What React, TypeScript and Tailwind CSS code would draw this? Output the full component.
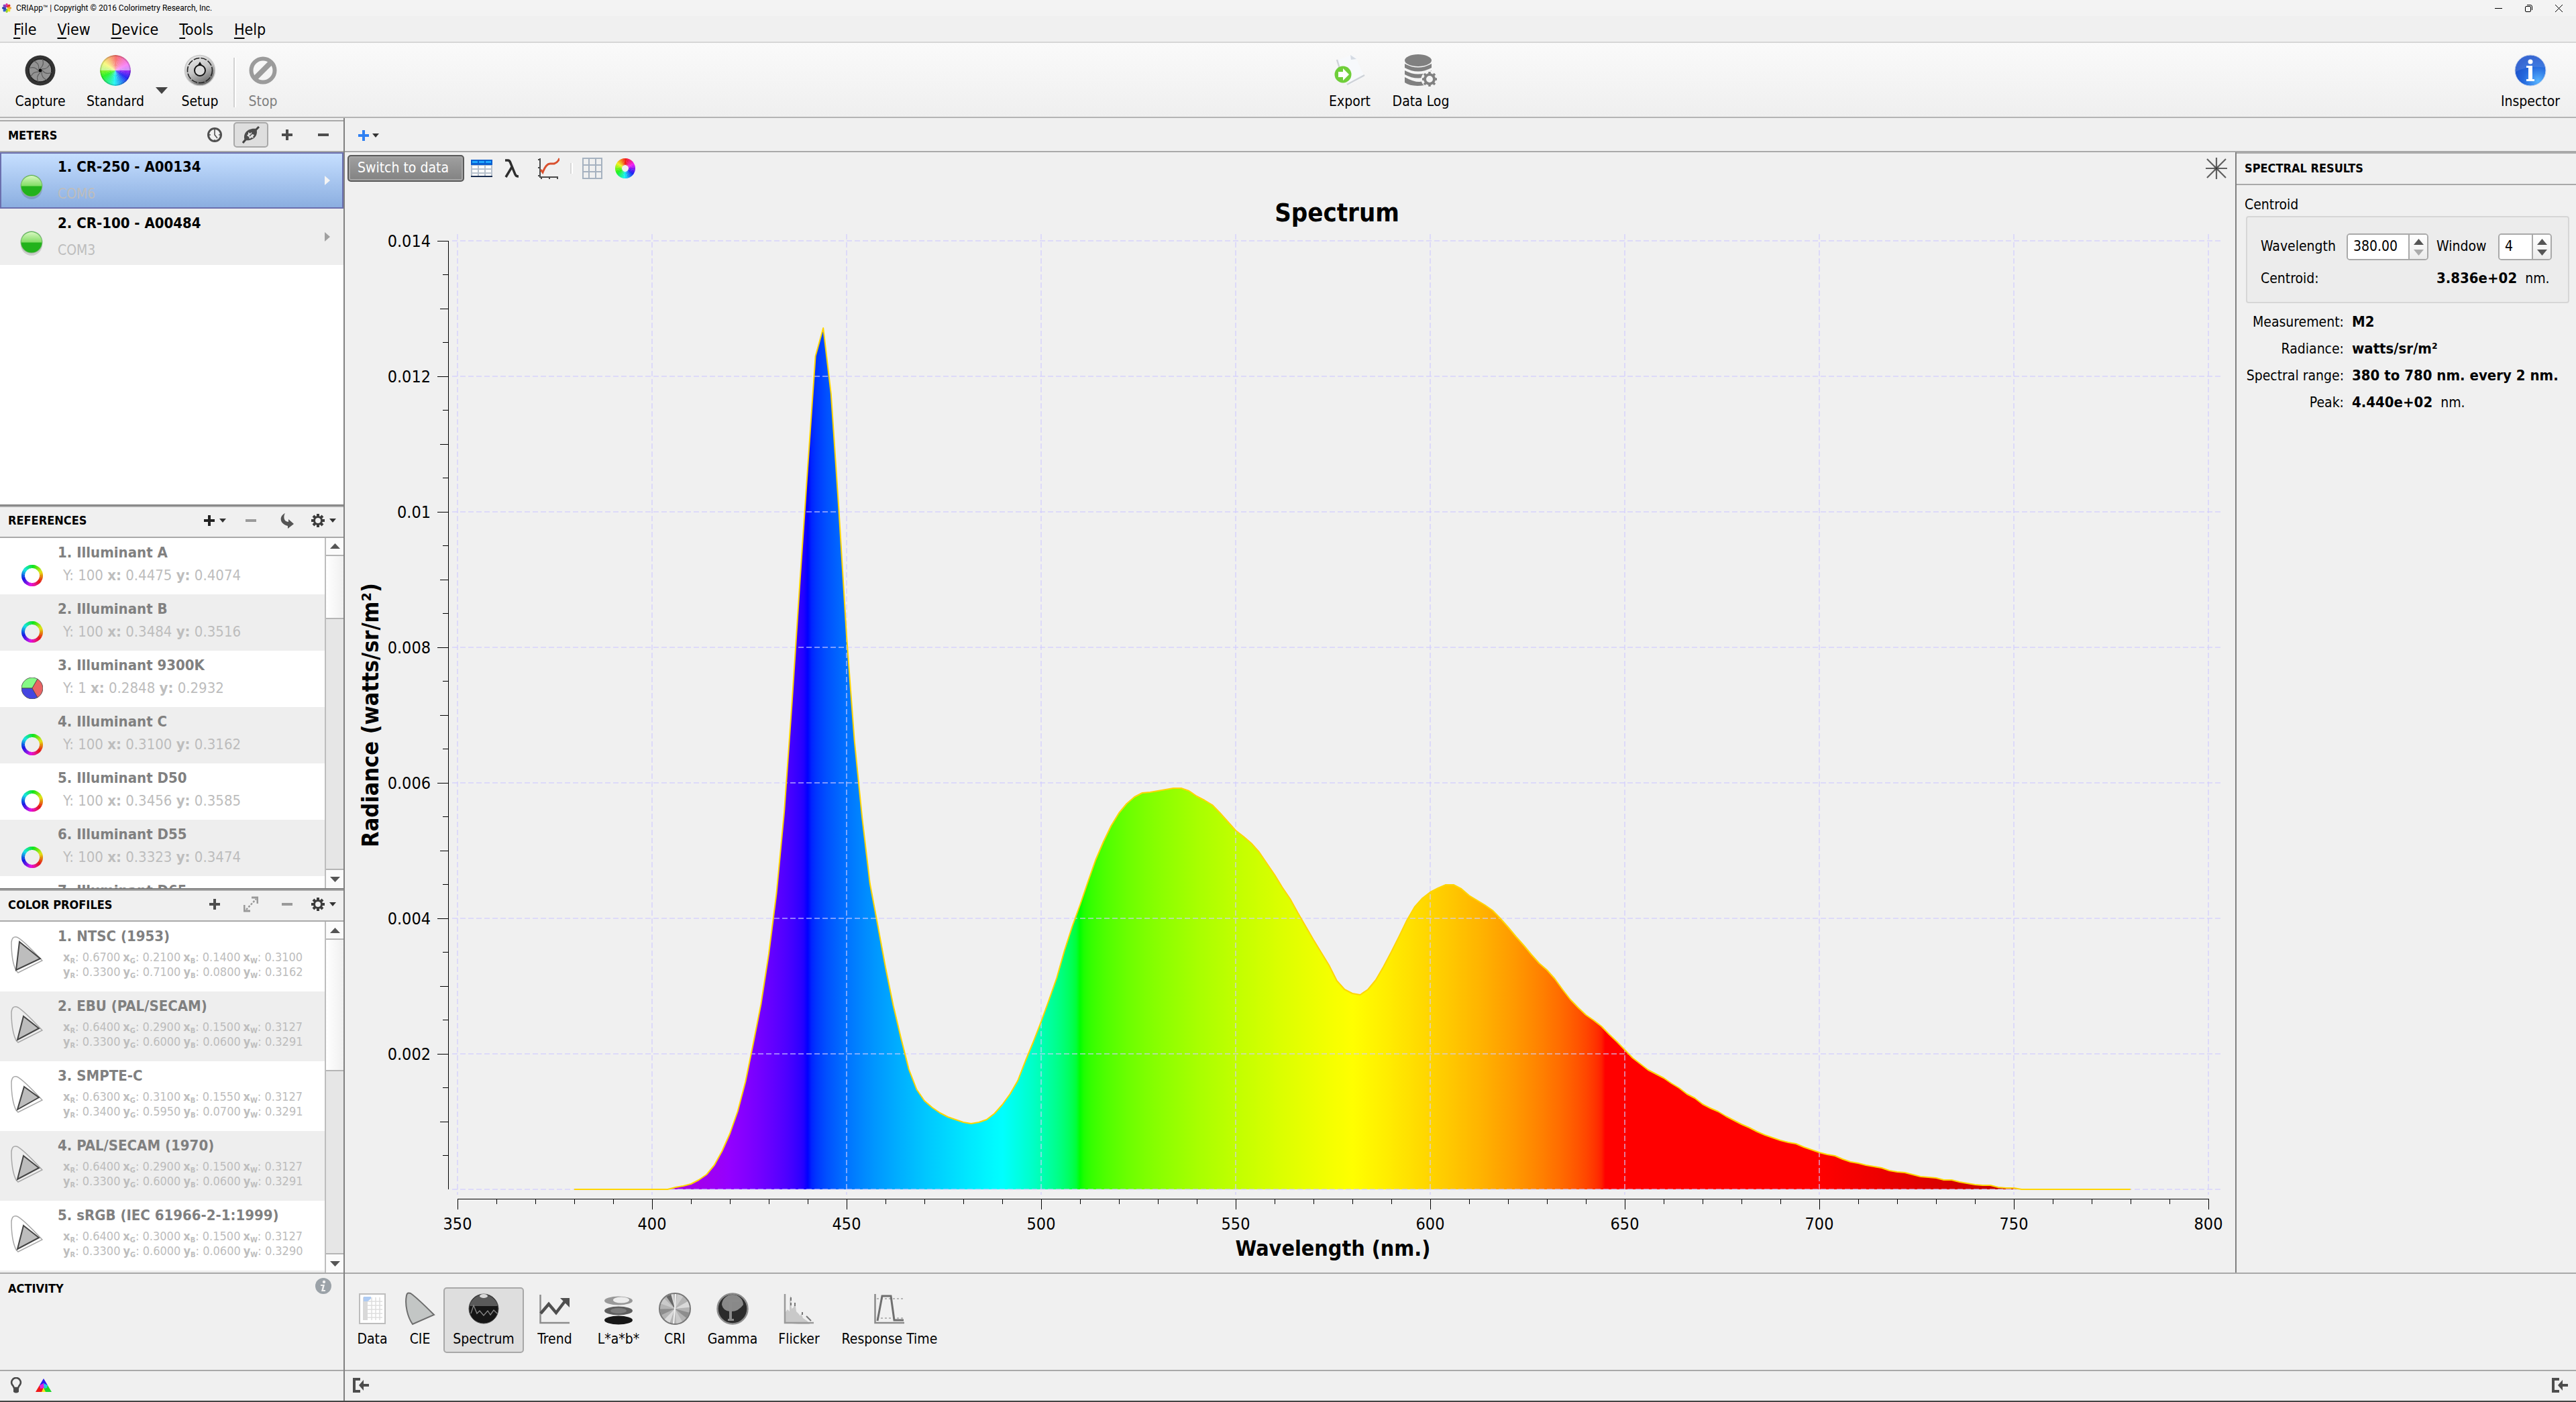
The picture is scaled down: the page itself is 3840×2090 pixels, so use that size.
import React from "react";

/* ------------------------------------------------------------------ data */

const meters = [
  { name: "1. CR-250 - A00134", port: "COM6", selected: true },
  { name: "2. CR-100 - A00484", port: "COM3", selected: false },
];

const references = [
  { name: "1. Illuminant A", Y: "100", x: "0.4475", y: "0.4074", pie: false },
  { name: "2. Illuminant B", Y: "100", x: "0.3484", y: "0.3516", pie: false },
  { name: "3. Illuminant 9300K", Y: "1", x: "0.2848", y: "0.2932", pie: true },
  { name: "4. Illuminant C", Y: "100", x: "0.3100", y: "0.3162", pie: false },
  { name: "5. Illuminant D50", Y: "100", x: "0.3456", y: "0.3585", pie: false },
  { name: "6. Illuminant D55", Y: "100", x: "0.3323", y: "0.3474", pie: false },
];

const profiles = [
  { name: "1. NTSC (1953)", x: ["0.6700", "0.2100", "0.1400", "0.3100"], y: ["0.3300", "0.7100", "0.0800", "0.3162"], gamut: "13,9 44,34 8,51" },
  { name: "2. EBU (PAL/SECAM)", x: ["0.6400", "0.2900", "0.1500", "0.3127"], y: ["0.3300", "0.6000", "0.0600", "0.3291"], gamut: "19,16 42,34 10,51" },
  { name: "3. SMPTE-C", x: ["0.6300", "0.3100", "0.1550", "0.3127"], y: ["0.3400", "0.5950", "0.0700", "0.3291"], gamut: "20,17 42,33 10,51" },
  { name: "4. PAL/SECAM (1970)", x: ["0.6400", "0.2900", "0.1500", "0.3127"], y: ["0.3300", "0.6000", "0.0600", "0.3291"], gamut: "19,16 42,34 10,51" },
  { name: "5. sRGB (IEC 61966-2-1:1999)", x: ["0.6400", "0.3000", "0.1500", "0.3127"], y: ["0.3300", "0.6000", "0.0600", "0.3290"], gamut: "19,16 42,34 10,51" },
];

/* Radiance samples from 404 nm to 752 nm, one every 2 nm, in units of 1/101000 W/sr/m2. */
const FIRST_NM = 404;
const samples = [
  0, 3, 5, 8, 14, 22, 36, 57, 83, 116, 160, 217, 276, 351, 442, 564, 728, 905, 1075, 1242, 1284, 1186, 1014, 825, 670,
  554, 456, 394, 331, 274, 225, 179, 149, 132, 122, 114, 108, 104, 100, 98, 100, 104, 113, 126, 142, 162, 192, 220,
  250, 282, 315, 356, 392, 424, 458, 491, 518, 542, 561, 575, 585, 591, 592, 594, 596, 598, 598, 594, 586, 580, 573,
  561, 548, 535, 526, 516, 503, 486, 469, 450, 433, 412, 392, 372, 353, 334, 311, 298, 292, 290, 298, 312, 332, 354,
  377, 401, 421, 434, 443, 449, 454, 454, 448, 438, 431, 424, 416, 404, 391, 377, 364, 350, 337, 327, 314, 298, 283,
  271, 260, 252, 243, 231, 220, 208, 196, 187, 178, 172, 166, 158, 151, 142, 136, 127, 121, 116, 109, 103, 97, 92, 86,
  81, 77, 73, 70, 68, 63, 59, 55, 52, 50, 45, 41, 39, 36, 34, 32, 28, 26, 25, 22, 19, 18, 17, 14, 14, 11, 9, 7, 6, 6, 3,
  2, 2, 0,
];

/* --------------------------------------------------------------- helpers */

const polar = (cx: number, cy: number, r: number, deg: number) => {
  const a = ((deg - 90) * Math.PI) / 180;
  return `${(cx + r * Math.cos(a)).toFixed(2)} ${(cy + r * Math.sin(a)).toFixed(2)}`;
};

function HueWheel({ size, start, hole = 0, light = 50, label }: { size: number; start: number; hole?: number; light?: number; label?: string }) {
  const n = 48;
  const step = 360 / n;
  const c = size / 2;
  return (
    <svg width={size} height={size} viewBox={`0 0 ${size} ${size}`} aria-label={label} className="block">
      {Array.from({ length: n }, (_, i) => {
        const a = i * step - 0.5;
        const b = (i + 1) * step + 0.5;
        const hue = (start - i * step + 720) % 360;
        const d = hole
          ? `M${polar(c, c, c, a)} A${c} ${c} 0 0 1 ${polar(c, c, c, b)} L${polar(c, c, hole, b)} A${hole} ${hole} 0 0 0 ${polar(c, c, hole, a)}Z`
          : `M${c} ${c} L${polar(c, c, c, a)} A${c} ${c} 0 0 1 ${polar(c, c, c, b)}Z`;
        return <path key={i} d={d} fill={`hsl(${hue} 90% ${light}%)`} />;
      })}
    </svg>
  );
}

/* Approximate display colour of a single wavelength. */
function spectral(w: number): string {
  let r = 0;
  let g = 0;
  let b = 0;
  if (w < 440) {
    r = (440 - w) / 60;
    b = 1;
  } else if (w < 490) {
    g = (w - 440) / 50;
    b = 1;
  } else if (w < 510) {
    g = 1;
    b = (510 - w) / 20;
  } else if (w < 580) {
    r = (w - 510) / 70;
    g = 1;
  } else if (w < 645) {
    r = 1;
    g = (645 - w) / 65;
  } else {
    r = 1;
  }
  let f = 1;
  if (w < 420) f = 0.3 + (0.7 * (w - 380)) / 40;
  if (w > 700) f = 0.3 + (0.7 * (780 - w)) / 80;
  const k = (v: number) => Math.round(255 * Math.sqrt(v * f));
  return `rgb(${k(r)},${k(g)},${k(b)})`;
}

/* ----------------------------------------------------------------- icons */

const Plus = ({ color = "#4d4d4d" }: { color?: string }) => (
  <svg width="16" height="16" viewBox="0 0 16 16"><path d="M6 0h4v6h6v4h-6v6H6v-6H0V6h6z" fill={color} /></svg>
);
const Minus = ({ color = "#4d4d4d" }: { color?: string }) => (
  <svg width="16" height="16" viewBox="0 0 16 16"><path d="M0 6h16v4H0z" fill={color} /></svg>
);
const Caret = () => (
  <svg width="10" height="6" viewBox="0 0 10 6"><path d="M0 0h10L5 6z" fill="#333" /></svg>
);
const Clock = () => (
  <svg width="24" height="24" viewBox="0 0 24 24" fill="none" stroke="#505050">
    <circle cx="12" cy="12" r="9.5" strokeWidth="3" />
    <path d="M12 4v8l4 5" strokeWidth="1.6" />
    <path d="M12 19v2M3 12h3M18 12h3" strokeWidth="1.4" />
  </svg>
);
const Plug = () => (
  <svg width="26" height="26" viewBox="0 0 26 26">
    <path d="M1 25l5-6M20 6l5-5" stroke="#444" strokeWidth="3" />
    <path d="M4 21C0 12 8 2 21 4c4 10-5 19-17 17z" fill="#4c4c4c" />
    <path d="M9 9l3 2 2-2 1 3 3 1-2 3 1 2-3-1-3 2-1-3-3-2 2-2z" fill="#e2e2e2" />
    <path d="M11 15l5-5" stroke="#4c4c4c" strokeWidth="1.500" />
  </svg>
);
const Gear = () => (
  <svg width="20" height="20" viewBox="0 0 20 20">
    <g stroke="#3c3c3c" strokeWidth="4">
      <path d="M10 0v20M0 10h20M3 3l14 14M17 3L3 17" />
    </g>
    <circle cx="10" cy="10" r="7" fill="#3c3c3c" />
    <circle cx="10" cy="10" r="4" fill="#f0f0f0" />
  </svg>
);
const Curl = () => (
  <svg width="22" height="24" viewBox="0 0 22 24">
    <path d="M8 1C-1 5-1 17 12 20v4l9-7-8-7v4C6 14 5 6 8 1z" fill="#555" />
  </svg>
);
const Expand = () => (
  <svg width="22" height="24" viewBox="0 0 22 24" fill="none" stroke="#999">
    <path d="M12 2h9v9" strokeWidth="3" />
    <path d="M1 13v9h9" strokeWidth="3" />
    <path d="M4 20L19 4" strokeWidth="2.4" strokeDasharray="3 2" />
  </svg>
);
const GreenLed = () => (
  <svg width="36" height="38" viewBox="0 0 36 38">
    <defs>
      <linearGradient id="led-top" x1="0" y1="0" x2="0" y2="1">
        <stop offset="0" stopColor="#d8f7c0" />
        <stop offset="1" stopColor="#7fdc62" />
      </linearGradient>
    </defs>
    <ellipse cx="18" cy="21" rx="16" ry="16" fill="#000" opacity=".14" />
    <circle cx="18" cy="17" r="16.5" fill="#8bb487" />
    <circle cx="18" cy="17" r="15.5" fill="#22b21c" />
    <path d="M2.500 17.500a15.500 15.500 0 0 1 31 0z" fill="url(#led-top)" />
  </svg>
);
const Pie = () => (
  <svg width="32" height="32" viewBox="0 0 32 32" stroke="#444" strokeWidth=".8">
    <path d="M16 16L24 2.200A16 16 0 0 0 0 16z" fill="#86f986" />
    <path d="M16 16H0A16 16 0 0 0 24 29.800z" fill="#4545e0" />
    <path d="M16 16L24 29.800A16 16 0 0 0 24 2.200z" fill="#e96464" />
  </svg>
);
const Gamut = ({ points }: { points: string }) => (
  <svg width="48" height="56" viewBox="0 0 48 56">
    <path d="M8 52C3 42 1 30 1 10Q2 0 9 2Q16 4 47 37L11 55Z" fill="none" stroke="#a8a8a8" strokeWidth="1.500" />
    <polygon points={points} fill="#bdbdbd" stroke="#444" strokeWidth="2" />
  </svg>
);

const Aperture = () => (
  <svg width="46" height="46" viewBox="0 0 46 46">
    <circle cx="23" cy="23" r="22.500" fill="#333" />
    <circle cx="23" cy="23" r="17" fill="#939393" stroke="#1f1f1f" strokeWidth="1.500" />
    <g stroke="#5e5e5e" strokeWidth="1.200" fill="none">
      {[0, 45, 90, 135, 180, 225, 270, 315].map((a) => (
        <path key={a} d="M23 20Q30 14 26 6" transform={`rotate(${a} 23 23)`} />
      ))}
    </g>
    <circle cx="23" cy="23" r="2.500" fill="#000" />
  </svg>
);
const StandardWheel = () => (
  <span className="relative block size-[46px] overflow-hidden rounded-full">
    <HueWheel size={46} start={0} light={56} />
    <span className="absolute inset-x-0 top-0 h-1/2 rounded-t-full bg-gradient-to-b from-white/30 to-white/50" />
    <span className="absolute inset-0 rounded-full border-2 border-black/15" />
  </span>
);
const Dial = () => (
  <svg width="48" height="48" viewBox="0 0 48 48">
    <defs>
      <linearGradient id="dial" x1="0.200" y1="0" x2="0.700" y2="1">
        <stop offset="0" stopColor="#ededed" />
        <stop offset=".5" stopColor="#c4c4c4" />
        <stop offset="1" stopColor="#5c5c5c" />
      </linearGradient>
    </defs>
    <circle cx="24" cy="24" r="22.500" fill="url(#dial)" stroke="#c9c9c9" strokeWidth="1.500" />
    <circle cx="24" cy="24" r="18.500" fill="none" stroke="#222" strokeWidth="1.600" strokeDasharray="9 2" />
    <circle cx="24" cy="24" r="8" fill="#dcdcdc" stroke="#111" strokeWidth="2" />
    <path d="M21 16l3-5 3 5z" fill="#111" />
  </svg>
);
const StopSign = () => (
  <svg width="42" height="42" viewBox="0 0 42 42" fill="none" stroke="#9b9b9b" strokeWidth="6">
    <circle cx="21" cy="21" r="17.500" />
    <path d="M9 33L33 9" strokeWidth="8" />
  </svg>
);
const ExportIcon = () => (
  <svg width="48" height="48" viewBox="0 0 48 48">
    <path d="M5 9L27 1l6 4 13 28-23 13z" fill="#f7f9fc" />
    <path d="M5 8l4 13M20 45l26-14" stroke="#cfd3d8" strokeWidth="2.500" fill="none" />
    <path d="M25 1l9 6-8 1z" fill="#d5dbe3" />
    <circle cx="14" cy="30" r="12.500" fill="#6fce3a" />
    <path d="M7 26h7v-5l9 9-9 9v-5H7z" fill="#fff" />
  </svg>
);
const DataLogIcon = () => (
  <svg width="50" height="50" viewBox="0 0 50 50">
    <g fill="#808080">
      <ellipse cx="21" cy="10" rx="20" ry="9" />
      <path d="M1 15q20 11 40 0v6q-20 11-40 0z" />
      <path d="M1 25q20 11 40 0v6q-20 11-40 0z" />
      <path d="M1 35q20 11 30 5v7q-20 3-30-4z" />
    </g>
    <circle cx="38" cy="38" r="12.500" fill="#f4f4f4" />
    <circle cx="38" cy="38" r="7" fill="none" stroke="#808080" strokeWidth="4" />
    <g stroke="#808080" strokeWidth="3.500">
      <path d="M38 27v4M38 45v4M27 38h4M45 38h4M30 30l3 3M43 43l3 3M46 30l-3 3M33 43l-3 3" />
    </g>
  </svg>
);
const InspectorIcon = () => (
  <svg width="48" height="48" viewBox="0 0 48 48">
    <defs>
      <radialGradient id="info" cx=".75" cy=".85" r=".8">
        <stop offset="0" stopColor="#58b4ff" />
        <stop offset=".6" stopColor="#2468dd" />
        <stop offset="1" stopColor="#1c53cc" />
      </radialGradient>
    </defs>
    <circle cx="24" cy="24" r="23" fill="url(#info)" stroke="#c5d3ec" />
    <path d="M2 26A22 22 0 0 1 46 20Q22 16 2 26z" fill="#fff" opacity=".12" />
    <circle cx="24" cy="11" r="3.500" fill="#fff" />
    <path d="M18 17h9v20h3v3H18v-3h3V20h-3z" fill="#fff" />
  </svg>
);

/* Icons of the bottom view switcher. */
const DataIcon = () => (
  <svg width="40" height="46" viewBox="0 0 40 46">
    <rect x="1" y="1" width="38" height="44" fill="#fff" stroke="#bdbdbd" strokeWidth="2" />
    <path d="M6 6h7v34H6z" fill="#d9d9d9" />
    <path d="M13 12h22M13 18h22M13 24h22M13 30h22M13 36h22M19 6v34M25 6v34M31 6v34" stroke="#dedede" strokeWidth="1.500" />
    <path d="M7 5h11v3l-5 4H7z" fill="#aecbf3" />
  </svg>
);
const CieIcon = () => (
  <svg width="46" height="50" viewBox="0 0 46 50">
    <path d="M12 48C5 38 0 20 3 5Q4 0 9 2Q18 8 44 34z" fill="#c3c6c5" stroke="#6d6d6d" strokeWidth="2" />
  </svg>
);
const SpectrumIcon = () => (
  <svg width="46" height="48" viewBox="0 0 46 48">
    <circle cx="23" cy="24" r="22" fill="#161616" stroke="#555" />
    <path d="M2 20a21.500 21.500 0 0 1 42 0z" fill="#5a5a5a" />
    <ellipse cx="23" cy="5" rx="6" ry="3" fill="#d8d8d8" />
    <path d="M4 31l4-12 5 12 4-4 6 7 6-7 4 6 5-7 5 5" fill="none" stroke="#8a8a8a" strokeWidth="1.300" />
  </svg>
);
const TrendIcon = () => (
  <svg width="46" height="46" viewBox="0 0 46 46">
    <path d="M1.500 2v42H45" fill="none" stroke="#8d8d8d" strokeWidth="2.500" />
    <path d="M2 30L14 16l11 13L38 12" fill="none" stroke="#4f4f4f" strokeWidth="4.500" />
    <path d="M31 7h14v14z" fill="#4f4f4f" />
  </svg>
);
const LabIcon = () => (
  <svg width="44" height="48" viewBox="0 0 44 48">
    <ellipse cx="22" cy="12" rx="21" ry="6.500" fill="#999" />
    <ellipse cx="26" cy="11" rx="12" ry="4.500" fill="#ececec" />
    <ellipse cx="22" cy="27" rx="21" ry="6.500" fill="#5e5e5e" />
    <ellipse cx="22" cy="27" rx="12" ry="4" fill="#7d7d7d" />
    <ellipse cx="22" cy="41" rx="21" ry="6.500" fill="#171717" />
  </svg>
);
const CriIcon = () => (
  <svg width="48" height="48" viewBox="0 0 48 48">
    <circle cx="24" cy="24" r="23" fill="#b3b3b3" stroke="#777" strokeWidth="2" />
    {[10, 60, 105, 150, 200, 245, 290, 330].map((a, i) => (
      <path key={a} d={`M24 24L${polar(24, 24, 22, a)} A22 22 0 0 1 ${polar(24, 24, 22, a + 24)}Z`} fill={i % 3 === 2 ? "#8d8d8d" : i % 3 === 1 ? "#dadada" : "#cacaca"} />
    ))}
    <path d={`M24 24L${polar(24, 24, 22, 325)} A22 22 0 0 1 ${polar(24, 24, 22, 345)}Z`} fill="#666" />
    <path d="M24 24L22 46M24 24l1-22" stroke="#f2f2f2" strokeWidth="2" />
  </svg>
);
const GammaIcon = () => (
  <svg width="48" height="48" viewBox="0 0 48 48">
    <circle cx="24" cy="24" r="22.500" fill="#2b2b2b" stroke="#8c8c8c" strokeWidth="2.500" />
    <path d="M8 18a16 15 0 0 1 32 0q-8 11-20 10Q10 27 8 18z" fill="#9a9a9a" opacity=".85" />
    <path d="M12 12q4-3 10-2h12v4H23v25h3v3h-9v-3h2V14q-4-1-7 1z" fill="#8b8b8b" />
  </svg>
);
const FlickerIcon = () => (
  <svg width="46" height="46" viewBox="0 0 46 46">
    <path d="M3 44V28l3-4 3 3V8l2-5 1 20 3-2 2-8 2 14 4 4 2 3 1-4 3 7 6 4 6 7z" fill="#c9c9c9" />
    <path d="M2 1v43h43" fill="none" stroke="#9a9a9a" strokeWidth="2.500" />
    <path d="M11 6v5M11 14v4M17 14v5M28 28v4M34 34l7 7" stroke="#777" strokeWidth="2" />
  </svg>
);
const ResponseIcon = () => (
  <svg width="46" height="46" viewBox="0 0 46 46">
    <path d="M1.500 1v43H45" fill="none" stroke="#8b8b8b" strokeWidth="2.500" />
    <path d="M4 8h40M4 37h40" stroke="#b5b5b5" strokeWidth="2" strokeDasharray="3 3" />
    <path d="M5 41L12 4h13l5 36h14" fill="none" stroke="#6f6f6f" strokeWidth="3" />
  </svg>
);
const Dock = () => (
  <svg width="24" height="22" viewBox="0 0 24 22">
    <path d="M11 2H2v18h9" fill="none" stroke="#4d4d4d" strokeWidth="4" />
    <path d="M9 11l7-8v6h8v4h-8v6z" fill="#4d4d4d" />
  </svg>
);

/* --------------------------------------------------------- small widgets */

function HeaderButton({ label, pressed, children }: { label: string; pressed?: boolean; children: React.ReactNode }) {
  return (
    <button
      type="button"
      aria-label={label}
      aria-pressed={pressed}
      className={
        pressed
          ? "flex h-[38px] w-[52px] mx-px items-center justify-center gap-[7px] rounded-[5px] border-2 border-[#a8a8a8] bg-[#dedede]"
          : "flex h-[38px] w-[54px] items-center justify-center gap-[7px]"
      }
    >
      {children}
    </button>
  );
}

function SectionHeader({ title, children }: { title: string; children?: React.ReactNode }) {
  return (
    <header className="flex h-[46px] shrink-0 items-center border-b-2 border-[#a9a9a9] bg-[#f0f0f0] pl-3 pr-[3px] pb-1">
      <h2 className="grow text-[18px] font-bold">{title}</h2>
      {children}
    </header>
  );
}

function ScrollBar({ thumb }: { thumb: string }) {
  return (
    <div className="flex w-7 shrink-0 flex-col border-l-2 border-[#bdbdbd] bg-[#e6e6e6]">
      <button type="button" aria-label="Scroll up" className="flex h-[27px] shrink-0 items-center justify-center border-b-2 border-[#b5b5b5] bg-[#fbfbfb]">
        <svg width="15" height="8" viewBox="0 0 15 8"><path d="M0 8h15L7.500 0z" fill="#555" /></svg>
      </button>
      <div className={`${thumb} shrink-0 border-b-2 border-[#b5b5b5] bg-gradient-to-r from-white to-[#f0f0f0]`} />
      <div className="grow" />
      <button type="button" aria-label="Scroll down" className="flex h-[29px] shrink-0 items-center justify-center border-t-2 border-[#b5b5b5] bg-[#fbfbfb]">
        <svg width="15" height="8" viewBox="0 0 15 8"><path d="M0 0h15L7.500 8z" fill="#555" /></svg>
      </button>
    </div>
  );
}

function ToolButton({ label, width, disabled, children }: { label: string; width: string; disabled?: boolean; children: React.ReactNode }) {
  return (
    <button type="button" disabled={disabled} className={`flex ${width} flex-col items-center gap-[6px] ${disabled ? "text-[#808080]" : ""}`}>
      <span className="flex h-[50px] items-center">{children}</span>
      <span className="text-[21px] leading-[30px] whitespace-nowrap">{label}</span>
    </button>
  );
}

function Coordinates({ axis, values }: { axis: string; values: string[] }) {
  return (
    <p className="flex h-[22px] items-center gap-1 whitespace-nowrap">
      {["R", "G", "B", "W"].map((c, i) => (
        <span key={c}>
          <b>
            {axis}
            <sub className="bottom-[-3px] text-[11px]">{c}</sub>
          </b>
          : {values[i]}
        </span>
      ))}
    </p>
  );
}

function SpinBox({ id, value, width, atMin }: { id: string; value: string; width: string; atMin?: boolean }) {
  return (
    <span className={`flex h-10 ${width} overflow-hidden rounded-[5px] border-2 border-[#a9a9a9] bg-white`}>
      <input id={id} defaultValue={value} className="w-0 grow bg-white pl-2 text-[21px] outline-none" />
      <span className="flex w-7 flex-col border-l-2 border-[#a9a9a9] bg-gradient-to-b from-white to-[#ececec]">
        <button type="button" aria-label="Increase" className="flex grow items-end justify-center pb-1">
          <svg width="15" height="9" viewBox="0 0 15 9"><path d="M0 9h15L7.500 0z" fill="#555" /></svg>
        </button>
        <button type="button" aria-label="Decrease" className="flex grow items-start justify-center pt-[3px]">
          <svg width="15" height="9" viewBox="0 0 15 9"><path d="M0 0h15L7.500 9z" fill={atMin ? "#ababab" : "#555"} /></svg>
        </button>
      </span>
    </span>
  );
}

/* ----------------------------------------------------------------- chart */

function SpectrumChart() {
  const px = (nm: number) => 168 + (nm - 350) * 5.8;
  const base = 1498;
  const top = base - 202 * 7;
  const curve = samples.map((s, i) => `${px(FIRST_NM + 2 * i).toFixed(1)},${base - s}`).join(" ");
  const nms = [350, 400, 450, 500, 550, 600, 650, 700, 750, 800];
  const levels = ["", "0.002", "0.004", "0.006", "0.008", "0.01", "0.012", "0.014"];
  return (
    <svg viewBox="0 0 2818 1622" className="block min-h-0 w-full grow" role="img" aria-label="Spectrum chart">
      <defs>
        <linearGradient id="spectral" gradientUnits="userSpaceOnUse" x1={px(380)} y1="0" x2={px(780)} y2="0">
          {Array.from({ length: 401 }, (_, i) => (
            <stop key={i} offset={i / 400} stopColor={spectral(380 + i)} />
          ))}
        </linearGradient>
      </defs>
      <text x="1479" y="55" textAnchor="middle" fontSize="38" fontWeight="bold">Spectrum</text>
      <polygon points={`${px(404)},${base} ${curve} ${px(752)},${base}`} fill="url(#spectral)" />
      <g stroke="#d0ccff" strokeOpacity=".6" strokeWidth="2" strokeDasharray="8 4">
        {nms.map((n) => (
          <path key={n} d={`M${px(n)} ${top - 10}V${base + 8}`} />
        ))}
        {levels.map((l, i) => (
          <path key={l} d={`M160 ${base - 202 * i}H2797`} />
        ))}
      </g>
      <polyline points={`${px(380)},${base} ${curve} ${px(780)},${base}`} fill="none" stroke="#ffd500" strokeWidth="2" strokeLinejoin="round" />
      <g stroke="#000" shapeRendering="crispEdges">
        <path d={`M154.500 ${top}V${base}`} />
        {Array.from({ length: 28 }, (_, i) => i + 1).map((i) => {
          const len = i % 4 === 0 ? 16 : i % 2 === 0 ? 12 : 8;
          return <path key={i} d={`M${154 - len} ${base - 50.5 * i}H154`} />;
        })}
        <path d={`M${px(350)} 1512.500H${px(800)}`} />
        {Array.from({ length: 46 }, (_, i) => (
          <path key={i} d={`M${px(350 + 10 * i)} 1512V${i % 5 === 0 ? 1528 : 1520}`} />
        ))}
      </g>
      <g fontSize="25">
        {levels.map((l, i) => (
          <text key={l} x="128" y={base - 202 * i + 9} textAnchor="end">{l}</text>
        ))}
        {nms.map((n) => (
          <text key={n} x={px(n)} y="1558" textAnchor="middle">{n}</text>
        ))}
      </g>
      <g fontWeight="bold" textAnchor="middle">
        <text x="1473" y="1597" fontSize="32">Wavelength (nm.)</text>
        <text transform="translate(50 791) rotate(-90)" fontSize="34">Radiance (watts/sr/m²)</text>
      </g>
    </svg>
  );
}

/* ------------------------------------------------------------------- app */

const tabs = [
  { label: "Data", width: "w-[72px]", icon: <DataIcon /> },
  { label: "CIE", width: "w-[70px]", icon: <CieIcon /> },
  { label: "Spectrum", width: "w-[120px]", icon: <SpectrumIcon />, active: true },
  { label: "Trend", width: "w-[92px]", icon: <TrendIcon /> },
  { label: "L*a*b*", width: "w-[98px]", icon: <LabIcon /> },
  { label: "CRI", width: "w-[70px]", icon: <CriIcon /> },
  { label: "Gamma", width: "w-[102px]", icon: <GammaIcon /> },
  { label: "Flicker", width: "w-[96px]", icon: <FlickerIcon /> },
  { label: "Response Time", width: "w-[174px]", icon: <ResponseIcon /> },
];

const results = [
  { label: "Measurement:", value: "M2", unit: "" },
  { label: "Radiance:", value: "watts/sr/m²", unit: "" },
  { label: "Spectral range:", value: "380 to 780 nm. every 2 nm.", unit: "" },
  { label: "Peak:", value: "4.440e+02", unit: "nm." },
];

export default function App() {
  return (
    <div className="flex h-screen flex-col overflow-hidden border-b-2 border-[#444] bg-[#f0f0f0] font-['DejaVu_Sans_Condensed','Noto_Sans',sans-serif] text-[21px] text-black">
      <div className="flex h-6 shrink-0 items-center bg-[#f3f3f3] pl-[3px] pr-5">
        <svg width="14" height="14" viewBox="0 0 14 14">
          {["#e0309a", "#e23030", "#f0a030", "#f3e020", "#9ad52a", "#2f62c8", "#2545a8", "#8a3fc0"].map((c, i) => (
            <ellipse key={c} cx="7" cy="3" rx="1.900" ry="3" fill={c} transform={`rotate(${i * 45} 7 7)`} />
          ))}
        </svg>
        <h1 className="ml-[7px] grow font-[Roboto,'Noto_Sans',sans-serif] text-[12px]">CRIApp™ | Copyright © 2016 Colorimetry Research, Inc.</h1>
        <div className="flex items-center gap-[34px]">
          <button type="button" aria-label="Minimize"><svg width="11" height="11" viewBox="0 0 11 11"><path d="M0 5.500h11" stroke="#000" /></svg></button>
          <button type="button" aria-label="Restore">
            <svg width="11" height="11" viewBox="0 0 11 11" fill="none" stroke="#000"><rect x=".5" y="2.500" width="8" height="8" rx="1.500" /><path d="M3 .5h5q2.500 0 2.500 2.500v5" /></svg>
          </button>
          <button type="button" aria-label="Close"><svg width="11" height="11" viewBox="0 0 11 11"><path d="M0 0l11 11M11 0L0 11" stroke="#000" /></svg></button>
        </div>
      </div>

      <nav className="flex h-10 shrink-0 items-center gap-[31px] border-b-2 border-[#d6d6d6] pl-5 pt-[2px] text-[23px]">
        {["File", "View", "Device", "Tools", "Help"].map((m) => (
          <button key={m} type="button">
            <span className="underline decoration-2 underline-offset-4">{m[0]}</span>
            {m.slice(1)}
          </button>
        ))}
      </nav>

      <div className="flex h-28 shrink-0 items-center justify-between border-b-2 border-[#b4b4b4] bg-gradient-to-b from-[#fafafa] to-[#efefef] pt-2">
        <div className="flex items-center pl-1">
          <ToolButton label="Capture" width="w-28"><Aperture /></ToolButton>
          <ToolButton label="Standard" width="w-28"><StandardWheel /></ToolButton>
          <button type="button" aria-label="Standard options" className="mt-6 ml-1 w-[22px]">
            <svg width="18" height="10" viewBox="0 0 18 10"><path d="M0 0h18L9 10z" fill="#444" /></svg>
          </button>
          <ToolButton label="Setup" width="w-[88px]"><Dial /></ToolButton>
          <span className="ml-[6px] h-[74px] w-1 border-l-2 border-[#d2d2d2] bg-white" />
          <ToolButton label="Stop" width="w-20" disabled><StopSign /></ToolButton>
        </div>
        <div className="flex items-center">
          <ToolButton label="Export" width="w-[88px]"><ExportIcon /></ToolButton>
          <ToolButton label="Data Log" width="w-[124px]"><DataLogIcon /></ToolButton>
        </div>
        <div className="flex items-center pr-3">
          <ToolButton label="Inspector" width="w-28"><InspectorIcon /></ToolButton>
        </div>
      </div>

      <div className="flex min-h-0 grow">
        <aside className="flex w-[514px] shrink-0 flex-col border-r-2 border-[#808080]">
          <div className="flex min-h-0 grow flex-col">
            <section className="mt-[3px] flex min-h-0 flex-1 flex-col border-t-2 border-[#a9a9a9]">
              <SectionHeader title="METERS">
                <HeaderButton label="Timer"><Clock /></HeaderButton>
                <HeaderButton label="Connect" pressed><Plug /></HeaderButton>
                <HeaderButton label="Add meter"><Plus /></HeaderButton>
                <HeaderButton label="Remove meter"><Minus /></HeaderButton>
              </SectionHeader>
              <ul className="grow bg-white text-[22px]">
                {meters.map((m) => (
                  <li
                    key={m.name}
                    className={
                      m.selected
                        ? "flex h-[84px] items-center border-2 border-[#6b6fae] bg-gradient-to-b from-[#c6dfff] to-[#8baee0] pl-[27px] pr-[18px]"
                        : "flex h-[84px] items-center bg-[#eee] pl-[29px] pr-5"
                    }
                  >
                    <span className="mt-5"><GreenLed /></span>
                    <div className="ml-[21px] grow leading-10">
                      <h3 className="font-bold">{m.name}</h3>
                      <p className="text-[21px] text-[#bdbdbd]">{m.port}</p>
                    </div>
                    <svg width="8" height="16" viewBox="0 0 8 16"><path d="M0 1l8 7-8 7z" fill={m.selected ? "#f4f4f4" : "#a0a0a0"} /></svg>
                  </li>
                ))}
              </ul>
            </section>

            <section className="flex min-h-0 flex-1 flex-col border-t-2 border-[#808080]">
              <div className="h-0.5 shrink-0 bg-[#a9a9a9]" />
              <SectionHeader title="REFERENCES">
                <HeaderButton label="Add reference"><Plus color="#222" /><Caret /></HeaderButton>
                <HeaderButton label="Remove reference"><Minus color="#9a9a9a" /></HeaderButton>
                <HeaderButton label="Send reference"><Curl /></HeaderButton>
                <HeaderButton label="Reference settings"><Gear /><Caret /></HeaderButton>
              </SectionHeader>
              <div className="flex min-h-0 grow basis-0 bg-white">
                <ul className="grow overflow-hidden text-[22px]">
                  {references.map((r) => (
                    <li key={r.name} className="flex h-[84px] pl-8 pt-[5px] even:bg-[#eee]">
                      <span className="mt-[35px]">{r.pie ? <Pie /> : <HueWheel size={32} start={125} hole={11} light={47} />}</span>
                      <div className="ml-[22px] leading-[34px]">
                        <h3 className="font-bold text-[#808080]">{r.name}</h3>
                        <p className="pl-2 text-[#bdbdbd]">
                          Y: {r.Y} <b>x:</b> {r.x} <b>y:</b> {r.y}
                        </p>
                      </div>
                    </li>
                  ))}
                  <li className="pt-[5px] pl-[86px] leading-[34px] font-bold text-[#808080]">7. Illuminant D65</li>
                </ul>
                <ScrollBar thumb="h-[94px]" />
              </div>
            </section>

            <section className="flex min-h-0 flex-1 flex-col border-t-2 border-[#808080]">
              <div className="h-0.5 shrink-0 bg-[#a9a9a9]" />
              <SectionHeader title="COLOR PROFILES">
                <HeaderButton label="Add profile"><Plus /></HeaderButton>
                <HeaderButton label="Expand profile"><Expand /></HeaderButton>
                <HeaderButton label="Remove profile"><Minus color="#9a9a9a" /></HeaderButton>
                <HeaderButton label="Profile settings"><Gear /><Caret /></HeaderButton>
              </SectionHeader>
              <div className="flex min-h-0 grow basis-0 bg-[#eee]">
                <ul className="grow overflow-hidden">
                  {profiles.map((p) => (
                    <li key={p.name} className="flex h-[104px] pl-4 pt-[5px] odd:bg-white">
                      <span className="mt-4"><Gamut points={p.gamut} /></span>
                      <div className="ml-[22px]">
                        <h3 className="text-[22px] leading-[34px] font-bold text-[#808080]">{p.name}</h3>
                        <div className="mt-[2px] pl-2 text-[18px] text-[#bdbdbd]">
                          <Coordinates axis="x" values={p.x} />
                          <Coordinates axis="y" values={p.y} />
                        </div>
                      </div>
                    </li>
                  ))}
                </ul>
                <ScrollBar thumb="h-[196px]" />
              </div>
            </section>
          </div>

          <section className="flex h-[145px] shrink-0 items-start border-t-2 border-[#a9a9a9] px-3 pt-[6px]">
            <h2 className="grow text-[18px] leading-8 font-bold">ACTIVITY</h2>
            <button type="button" aria-label="Activity information" className="mr-[6px]">
              <svg width="24" height="24" viewBox="0 0 24 24">
                <circle cx="12" cy="12" r="12" fill="#9ba2a8" />
                <circle cx="13" cy="6" r="2.200" fill="#f0f0f0" />
                <path d="M8 10h6l-2 8h3v2H9l2-8H8z" fill="#f0f0f0" />
              </svg>
            </button>
          </section>
          <div className="flex h-[46px] shrink-0 items-center gap-[20px] border-t-2 border-[#a9a9a9] pb-[2px] pl-[15px]">
            <button type="button" aria-label="Light">
              <svg width="18" height="24" viewBox="0 0 18 24">
                <path d="M6 16Q5 13 3 11a6.800 6.800 0 1 1 12 0q-2 2-3 5z" fill="none" stroke="#4a4a4a" strokeWidth="2.600" />
                <path d="M5 17h8v5q-4 3-8 0z" fill="#4a4a4a" />
              </svg>
            </button>
            <button type="button" aria-label="Colour triangle">
              <svg width="24" height="20" viewBox="0 0 24 20">
                <path d="M12 0l6 10H6z" fill="#2a1cf0" />
                <path d="M6 10L0 20h10l2-8z" fill="#f01818" />
                <path d="M18 10l6 10H12V12z" fill="#1ed52a" />
                <path d="M6 10l6-3 1 7-6 1z" fill="#e020e0" />
                <path d="M12 7l6 3-1 4-4 1z" fill="#20c8e8" />
                <path d="M9 20l3-6 3 6z" fill="#f5e21a" />
              </svg>
            </button>
          </div>
        </aside>

        <div className="flex min-w-0 grow flex-col">
          <div className="flex h-[51px] shrink-0 items-center gap-[5px] border-b-2 border-[#a9a9a9] pl-5 pt-[2px]">
            <button type="button" aria-label="Add view" className="flex items-center gap-[5px]">
              <Plus color="#2f80f2" />
              <Caret />
            </button>
          </div>

          <div className="flex min-h-0 grow">
            <main className="flex min-w-0 grow flex-col">
              <div className="flex h-12 shrink-0 items-center pl-1 pr-3">
                <button type="button" className="h-10 w-[174px] rounded-[5px] border-2 border-[#5a5a5a] bg-gradient-to-b from-[#a0a0a0] to-[#828282] pr-2 text-white shadow-[inset_0_0_0_2px_#a6a6a6]">
                  Switch to data
                </button>
                <button type="button" aria-label="Table" className="ml-[10px]">
                  <svg width="32" height="28" viewBox="0 0 32 28">
                    <rect x="0" y="1" width="32" height="26" fill="#b6c0cc" />
                    <path d="M0 1h32v8H0z" fill="#0a5fd0" />
                    <path d="M2 3h8v3H2zM12 3h8v3h-8zM22 3h8v3h-8z" fill="#22aaff" />
                    <path d="M2 10h8v4H2zM12 10h8v4h-8zM22 10h8v4h-8zM2 16h8v4H2zM12 16h8v4h-8zM22 16h8v4h-8zM2 22h8v3H2zM12 22h8v3h-8zM22 22h8v3h-8z" fill="#fff" />
                    <path d="M0 25h32v2H0z" fill="#1b2f52" />
                  </svg>
                </button>
                <button type="button" aria-label="Wavelength" className="ml-[18px]">
                  <svg width="22" height="30" viewBox="0 0 22 30" fill="none" stroke="#2e2e2e" strokeWidth="3.500">
                    <path d="M1 3h4q3 0 4 4l7 17q1 3 5 3M11 13L2 28" />
                  </svg>
                </button>
                <button type="button" aria-label="Curve" className="ml-7">
                  <svg width="32" height="32" viewBox="0 0 32 32" fill="none">
                    <path d="M3 1v28h27M0 3h3M0 15h3M0 27h3M5 29v3M17 29v3M29 29v3" stroke="#4a4a4a" strokeWidth="2" />
                    <path d="M4 18l3 4q5-13 11-13h6q6-2 8-8" stroke="#d9502e" strokeWidth="3" />
                  </svg>
                </button>
                <span className="ml-4 h-4 w-1 border-l-2 border-[#d8d8d8] bg-white" />
                <button type="button" aria-label="Grid" className="ml-[14px]">
                  <svg width="30" height="32" viewBox="0 0 30 32" fill="none" stroke="#a6b2c0" strokeWidth="2">
                    <path d="M1 1h28v30H1zM0 11h30M0 21h30M10 0v32M20 0v32" />
                  </svg>
                </button>
                <button type="button" aria-label="Colours" className="ml-[19px]">
                  <HueWheel size={30} start={0} hole={5} light={52} />
                </button>
                <button type="button" aria-label="Reset zoom" className="ml-auto">
                  <svg width="32" height="32" viewBox="0 0 32 32" stroke="#606060" strokeWidth="2.200">
                    <path d="M16 0v32M0 16h32M2 2l28 28M30 2L2 30" />
                    <circle cx="16" cy="16" r="2.500" fill="#333" />
                  </svg>
                </button>
              </div>
              <SpectrumChart />
            </main>

            <aside className="w-[508px] shrink-0 border-l-2 border-[#808080] shadow-[inset_0_2px_0_#a9a9a9]">
              <h2 className="flex h-[49px] items-center border-b-2 border-[#a9a9a9] pl-3 text-[18px] font-bold">SPECTRAL RESULTS</h2>
              <div className="pl-3 pr-[10px] pt-[14px]">
                <h3 className="leading-[30px]">Centroid</h3>
                <div className="mt-[2px] ml-[2px] h-[130px] rounded-[4px] border-2 border-[#d6d6d6] bg-[#ececec] px-5 pt-6">
                  <div className="flex items-center">
                    <label htmlFor="wavelength" className="w-[128px]">Wavelength</label>
                    <SpinBox id="wavelength" value="380.00" width="w-[122px]" atMin />
                    <label htmlFor="window" className="ml-3 w-[92px]">Window</label>
                    <SpinBox id="window" value="4" width="w-20" />
                  </div>
                  <p className="mt-2 flex leading-[38px]">
                    <span className="w-[262px]">Centroid:</span>
                    <b className="mr-3 text-[22px]">3.836e+02</b>nm.
                  </p>
                </div>
                <dl className="mt-2 grid grid-cols-[148px_1fr] gap-x-3 leading-10 whitespace-nowrap">
                  {results.map((r) => (
                    <React.Fragment key={r.label}>
                      <dt className="flex justify-end">{r.label}</dt>
                      <dd className="h-10"><b className="mr-3 text-[22px]">{r.value}</b>{r.unit}</dd>
                    </React.Fragment>
                  ))}
                </dl>
              </div>
            </aside>
          </div>

          <div className="flex h-[145px] shrink-0 items-start border-t-2 border-[#a9a9a9] pl-[5px] pt-5" role="tablist">
            {tabs.map((t) => (
              <button
                key={t.label}
                type="button"
                role="tab"
                aria-selected={!!t.active}
                className={`flex h-[98px] ${t.width} flex-col items-center rounded-[5px] border-2 ${t.active ? "border-[#a8a8a8] bg-[#dedede]" : "border-transparent"}`}
              >
                <span className="mt-[5px] flex h-[50px] items-center">{t.icon}</span>
                <span className="mt-[5px] leading-[30px] whitespace-nowrap">{t.label}</span>
              </button>
            ))}
          </div>
          <div className="flex h-[46px] shrink-0 items-center justify-between border-t-2 border-[#a9a9a9] pr-3 pb-[2px] pl-3">
            <button type="button" aria-label="Toggle left panel"><Dock /></button>
            <button type="button" aria-label="Toggle right panel"><Dock /></button>
          </div>
        </div>
      </div>
    </div>
  );
}
